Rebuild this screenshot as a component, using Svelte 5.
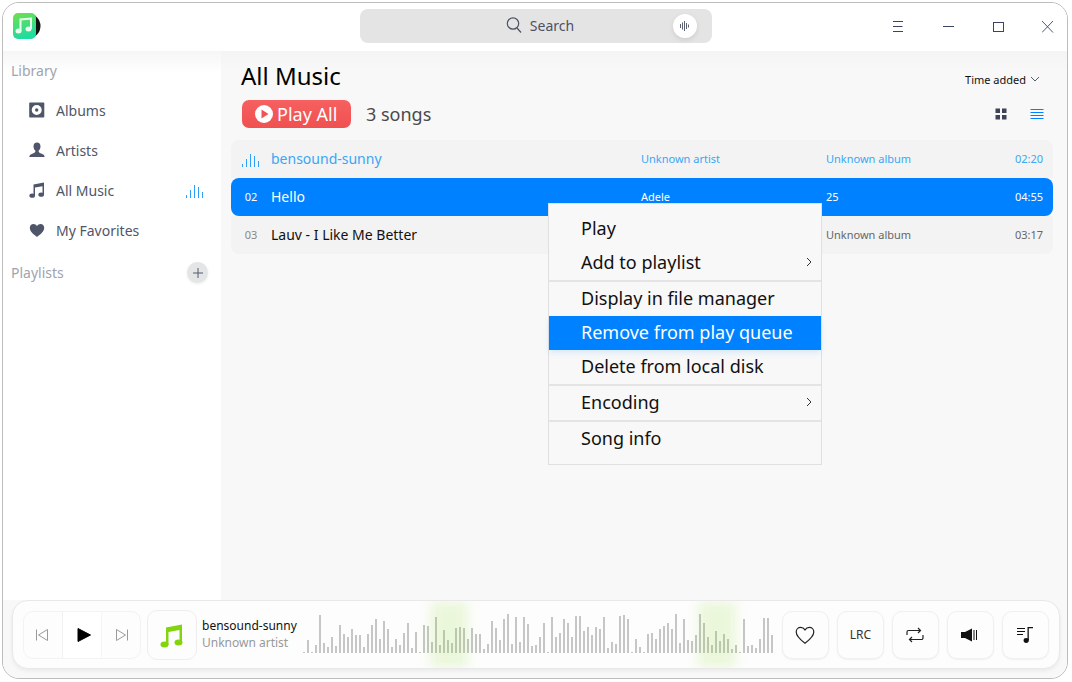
<script>
	const nav = [
		{ name: 'Albums', icon: 'album' },
		{ name: 'Artists', icon: 'artist' },
		{ name: 'All Music', icon: 'music', playing: true },
		{ name: 'My Favorites', icon: 'heart' }
	];
	const songs = [
		{ no: '', title: 'bensound-sunny', artist: 'Unknown artist', album: 'Unknown album', time: '02:20', cls: 'current' },
		{ no: '02', title: 'Hello', artist: 'Adele', album: '25', time: '04:55', cls: 'selected' },
		{ no: '03', title: 'Lauv - I Like Me Better', artist: '', album: 'Unknown album', time: '03:17', cls: 'plain' }
	];
	const menu = [
		[{ label: 'Play' }, { label: 'Add to playlist', sub: true }],
		[{ label: 'Display in file manager' }, { label: 'Remove from play queue', hover: true }, { label: 'Delete from local disk' }],
		[{ label: 'Encoding', sub: true }],
		[{ label: 'Song info' }]
	];
	// bar heights read off the waveform, in thirds of a pixel
	const wave = [3,38,3,24,114,30,18,48,21,84,57,48,72,54,54,18,57,84,102,42,96,72,18,42,24,60,90,15,63,3,84,81,33,108,24,69,39,30,75,78,75,42,75,57,57,12,27,96,75,39,102,117,27,108,33,108,87,21,24,48,90,3,108,48,60,102,90,48,111,111,66,78,54,78,72,108,15,33,27,111,114,102,3,42,18,3,57,60,42,72,81,90,72,117,30,102,39,36,54,117,90,48,24,66,36,57,42,12,24,3,102,21,24,15,42,105,105,54];
</script>

{#snippet bars()}
	<svg class="eq" width="18" height="16" viewBox="0 0 18 16">
		<rect x="0" y="12" width="1" height="3" /><rect x="4" y="7" width="1" height="8" /><rect x="8" y="2" width="1" height="13" /><rect x="12" y="4" width="1" height="11" /><rect x="16" y="9" width="1" height="6" />
	</svg>
{/snippet}

<div class="window">
	<header>
		<div class="logo">
			<svg width="30" height="28" viewBox="0 0 30 28">
				<defs>
					<linearGradient id="lg" x1="0" y1="0" x2="0.3" y2="1"><stop offset="0" stop-color="#72e04a" /><stop offset="1" stop-color="#1fdca0" /></linearGradient>
				</defs>
				<circle cx="15" cy="14" r="12.500" fill="#111" />
				<rect x="0" y="1" width="23" height="26" rx="5" fill="url(#lg)" />
				<path d="M7.500 19V7.500L18 6.500V17" fill="none" stroke="#eafff0" stroke-width="2" />
				<ellipse cx="5.500" cy="19" rx="3" ry="2.500" fill="#eafff0" />
				<ellipse cx="15.500" cy="17" rx="3" ry="2.500" fill="#eafff0" />
			</svg>
		</div>
		<div class="search">
			<svg width="18" height="18" viewBox="0 0 18 18" fill="none" stroke="#4c5263" stroke-width="1.200"><circle cx="8" cy="7.500" r="5.700" /><path d="M12 12l4 4.500" /></svg>
			<span>Search</span>
			<div class="voice">
				<svg width="12" height="12" viewBox="0 0 12 12" stroke="#5c6274" stroke-width="1"><path d="M1.500 4v4M3.500 2.500v7M5.500 1v10M7.500 3v6M9.500 4.500v3" /></svg>
			</div>
		</div>
		<div class="controls">
			<svg width="12" height="12" viewBox="0 0 12 12" stroke="#3b4560"><path d="M0 0.500h10M0 5.500h9.500M0 10.500h10" /></svg>
			<svg width="12" height="12" viewBox="0 0 12 12" stroke="#3b4560"><path d="M0 5.500h11" /></svg>
			<svg width="12" height="12" viewBox="0 0 12 12" fill="none" stroke="#3b4560"><rect x="0.500" y="1.500" width="10" height="9" /></svg>
			<svg width="12" height="12" viewBox="0 0 12 12" stroke="#3b4560" stroke-width="0.900"><path d="M0 0l11 11.500M11 0L0 11.500" /></svg>
		</div>
	</header>

	<div class="body">
		<aside>
			<h3>Library</h3>
			<nav>
				{#each nav as item}
					<div class="nav-item">
						<svg width="18" height="18" viewBox="0 0 18 18" fill="#4f5669">
							{#if item.icon === 'album'}
								<path fill-rule="evenodd" d="M2 1.500h13.500a.8.8 0 0 1 .8.8v13.400a.8.8 0 0 1-.8.8H2a.8.8 0 0 1-.8-.8V2.300a.8.8 0 0 1 .8-.8zM8.700 4a5 5 0 1 0 0 10 5 5 0 0 0 0-10z" />
								<circle cx="8.700" cy="9" r="1.700" />
							{:else if item.icon === 'artist'}
								<path d="M9 1.500c2.200 0 3.500 1.700 3.500 3.900 0 1.900-.9 3.400-1.800 4.200v1.200c0 .8 1.400 1.300 3 1.900 1.500.6 2.800 1.200 3 3.300H1.300c.2-2.100 1.500-2.700 3-3.300 1.600-.6 3-1.100 3-1.900V9.600c-.9-.8-1.800-2.300-1.800-4.200 0-2.200 1.300-3.900 3.500-3.900z" />
							{:else if item.icon === 'music'}
								<path d="M5.500 3.500L16 1.500v12h-1.500V5.200L7 6.600V15H5.500z" />
								<ellipse cx="4.200" cy="14.700" rx="2.800" ry="2.100" />
								<ellipse cx="13.200" cy="13.700" rx="2.800" ry="2.100" />
							{:else}
								<path d="M9 16C5 13 1.800 10.300 1.800 6.800 1.800 4.500 3.500 3 5.400 3 6.900 3 8.200 3.800 9 5.100 9.800 3.800 11.100 3 12.600 3c1.900 0 3.600 1.500 3.600 3.800C16.200 10.300 13 13 9 16z" />
							{/if}
						</svg>
						<span>{item.name}</span>
						{#if item.playing}{@render bars()}{/if}
					</div>
				{/each}
			</nav>
			<div class="playlists">
				<h3>Playlists</h3>
				<div class="add">
					<svg width="12" height="12" viewBox="0 0 12 12" stroke="#555b6c"><path d="M6 1v10M1 6h10" /></svg>
				</div>
			</div>
		</aside>

		<main>
			<div class="title-row">
				<h1>All Music</h1>
				<div class="sort">
					<span>Time added</span>
					<svg width="10" height="10" viewBox="0 0 10 10" fill="none" stroke="#555b6c"><path d="M1 3l4 4 4-4" /></svg>
				</div>
			</div>
			<div class="action-row">
				<button class="play-all">
					<svg width="18" height="18" viewBox="0 0 18 18"><circle cx="9" cy="9" r="9" fill="#fff" /><path d="M6.500 4.500l7 4.500-7 4.500z" fill="#f25454" /></svg>
					Play All
				</button>
				<span class="count">3 songs</span>
				<div class="views">
					<svg width="12" height="12" viewBox="0 0 12 12" fill="#3d4358"><rect x="0.500" y="0.500" width="4.500" height="4.500" /><rect x="7" y="0.500" width="4.500" height="4.500" /><rect x="0.500" y="7" width="4.500" height="4.500" /><rect x="7" y="7" width="4.500" height="4.500" /></svg>
					<svg width="14" height="12" viewBox="0 0 14 12" stroke="#0081ff"><path d="M0.500 1.500h13M0.500 4.500h13M0.500 7.500h13M0.500 10.500h13" /></svg>
				</div>
			</div>
			<div class="list">
				{#each songs as song}
					<div class="row {song.cls}">
						<div class="no">{#if song.no}{song.no}{:else}{@render bars()}{/if}</div>
						<div class="song-title">{song.title}</div>
						<div class="artist">{song.artist}</div>
						<div class="album">{song.album}</div>
						<div class="time">{song.time}</div>
					</div>
				{/each}
			</div>
		</main>
	</div>

	<footer>
		<div class="player">
			<div class="transport">
				<div class="t-btn prev">
					<svg width="14" height="14" viewBox="0 0 14 14" fill="none" stroke="#9a9a9a"><path d="M1.500 1.500v11M12.500 1.500v11L3.500 7z" /></svg>
				</div>
				<div class="t-btn main">
					<svg width="16" height="16" viewBox="0 0 16 16" fill="#000" stroke="#000" stroke-linejoin="round"><path d="M2 1.500L14.500 8 2 14.500z" /></svg>
				</div>
				<div class="t-btn next">
					<svg width="14" height="14" viewBox="0 0 14 14" fill="none" stroke="#9a9a9a"><path d="M12.500 1.500v11M1.500 1.500v11l9-5.500z" /></svg>
				</div>
			</div>
			<div class="cover">
				<svg width="26" height="28" viewBox="0 0 26 28" fill="#82d40f">
					<path d="M7 6.500L23 3.500v18h-2.500V9L9.500 11v13H7z" />
					<ellipse cx="5.500" cy="23.500" rx="4" ry="3" />
					<ellipse cx="19.500" cy="21.500" rx="4" ry="3" />
				</svg>
			</div>
			<div class="now">
				<div class="now-title">bensound-sunny</div>
				<div class="now-artist">Unknown artist</div>
			</div>
			<div class="wave">
				{#each wave as h}
					<i style="height:{h / 3}px"></i>
				{/each}
				<b class="glow g1"></b>
				<b class="glow g2"></b>
			</div>
			<div class="tools">
				<div class="tool">
					<svg class="nudge" width="22" height="22" viewBox="0 0 20 20" fill="none" stroke="#222" stroke-width="1.100"><path d="M10 17.500C5.500 14 2 11 2 7.200 2 4.700 3.900 3 6 3c1.700 0 3.100.9 4 2.300C10.900 3.900 12.300 3 14 3c2.100 0 4 1.700 4 4.200 0 3.800-3.500 6.800-8 10.300z" /></svg>
				</div>
				<div class="tool lrc">LRC</div>
				<div class="tool">
					<svg class="nudge" width="18" height="16" viewBox="0 0 18 16" fill="none" stroke="#222" stroke-width="1.200"><path d="M1 8V5a1.500 1.500 0 0 1 1.500-1.500H14M12 1l2.500 2.500L12 6M17 8v3a1.500 1.500 0 0 1-1.500 1.500H4M6 10l-2.500 2.500L6 15" /></svg>
				</div>
				<div class="tool">
					<svg class="nudge two" width="16" height="14" viewBox="0 0 16 14" fill="#111"><path d="M0 4h4l7-3.500v13L4 10H0z" /><rect x="12.500" y="2" width="1" height="10" /><rect x="15" y="2" width="1" height="10" /></svg>
				</div>
				<div class="tool">
					<svg width="18" height="18" viewBox="0 0 18 18" fill="#111"><rect x="0" y="2" width="8" height="1" /><rect x="0" y="5" width="8" height="1" /><rect x="0" y="8" width="6" height="1" /><path d="M10.500 1H16v1.300h-4.200V14H10.500z" /><ellipse cx="9.200" cy="14.500" rx="2.600" ry="2.400" /></svg>
				</div>
			</div>
		</div>
	</footer>

	<div class="context">
		{#each menu as group, i}
			{#if i > 0}<div class="sep"></div>{/if}
			{#each group as item}
				<div class="menu-item" class:hover={item.hover}>
					<span>{item.label}</span>
					{#if item.sub}
						<svg width="6" height="10" viewBox="0 0 6 10" fill="none" stroke="#333"><path d="M1 1l4 4-4 4" /></svg>
					{/if}
				</div>
			{/each}
		{/each}
	</div>
</div>

<style>
	:global(body) {
		background: #fff;
		font-family: 'Noto Sans', sans-serif;
	}
	.window {
		position: relative;
		box-sizing: border-box;
		width: 1066px;
		height: 677px;
		margin: 2px 0 0 2px;
		border: 1px solid #bdbdbd;
		border-radius: 17px;
		overflow: hidden;
		display: flex;
		flex-direction: column;
		background: #f8f8f8;
	}
	header {
		height: 48px;
		flex: none;
		background: #fff;
		display: flex;
		align-items: center;
		position: relative;
	}
	.logo {
		margin: 0 0 2px 10px;
		height: 28px;
	}
	.search {
		position: absolute;
		left: 357px;
		top: 6px;
		width: 352px;
		height: 34px;
		box-sizing: border-box;
		padding: 0 0 2px 7px;
		border-radius: 8px;
		background: #e4e4e4;
		display: flex;
		align-items: center;
		justify-content: center;
		gap: 7px;
		font-size: 14px;
		color: #4c5263;
	}
	.voice {
		position: absolute;
		right: 15px;
		top: 5px;
		width: 24px;
		height: 24px;
		border-radius: 50%;
		background: #fff;
		box-shadow: 0 2px 5px rgba(0, 0, 0, 0.1);
		display: flex;
		align-items: center;
		justify-content: center;
	}
	.controls {
		margin-left: auto;
		display: flex;
		gap: 38px;
		align-items: center;
		padding: 0 13px 0 0;
	}
	.controls svg:last-child {
		margin-left: -1px;
	}
	.body {
		flex: 1;
		min-height: 0;
		display: flex;
	}
	aside {
		width: 218px;
		flex: none;
		background: linear-gradient(#f6f6f6, #fff 22px);
		box-sizing: border-box;
		padding: 10px 12px 0 8px;
	}
	h3 {
		margin: 0;
		font-size: 14px;
		font-weight: 400;
		line-height: 20px;
		color: #a0a4ae;
	}
	nav {
		margin-top: 9px;
		display: flex;
		flex-direction: column;
		padding-left: 17px;
	}
	.nav-item {
		height: 40px;
		display: flex;
		align-items: center;
		gap: 10px;
		font-size: 14px;
		color: #4f5669;
	}
	.eq {
		fill: #2ea0f5;
	}
	.nav-item .eq {
		margin-left: auto;
		margin-top: 2px;
		margin-right: 5px;
	}
	.no .eq {
		margin-top: 4px;
	}
	.playlists {
		margin-top: 12px;
		display: flex;
		align-items: center;
		justify-content: space-between;
	}
	.add {
		width: 21px;
		height: 21px;
		border-radius: 50%;
		background: #e4e5e7;
		box-shadow: 0 1px 3px rgba(0, 0, 0, 0.08);
		display: flex;
		align-items: center;
		justify-content: center;
		margin-right: 1px;
	}
	main {
		flex: 1;
		min-width: 0;
		background: linear-gradient(#f4f4f4, #f8f8f8 20px);
		padding: 0 14px 0 10px;
	}
	.title-row {
		display: flex;
		align-items: center;
		justify-content: space-between;
		height: 48px;
		padding: 0 10px;
	}
	h1 {
		margin: 2px 0 0;
		font-size: 24px;
		font-weight: 400;
		line-height: 48px;
		color: #000;
	}
	.sort {
		display: flex;
		align-items: center;
		gap: 4px;
		font-size: 11px;
		color: #111;
		margin-top: 8px;
		padding-right: 3px;
	}
	.action-row {
		display: flex;
		align-items: center;
		height: 30px;
		padding-left: 11px;
		padding-right: 9px;
	}
	.play-all {
		width: 109px;
		height: 28px;
		border: none;
		border-radius: 7px;
		background: linear-gradient(#f66060, #f05050);
		color: #fff;
		font: 400 18px 'Noto Sans', sans-serif;
		display: flex;
		align-items: center;
		gap: 4px;
		padding: 0 0 0 13px;
	}
	.count {
		margin-left: 15px;
		font-size: 18px;
		color: #4a4a4a;
	}
	.views {
		margin-left: auto;
		display: flex;
		align-items: center;
		gap: 23px;
	}
	.list {
		margin-top: 11px;
		display: flex;
		flex-direction: column;
	}
	.row {
		height: 38px;
		box-sizing: border-box;
		padding-bottom: 2px;
		display: flex;
		align-items: center;
		font-size: 14px;
		background: #f3f3f3;
	}
	.row:first-child {
		border-radius: 8px 8px 0 0;
	}
	.row:last-child {
		border-radius: 0 0 8px 8px;
	}
	.no {
		width: 40px;
		flex: none;
		text-align: center;
		font-size: 11px;
		color: #888;
		display: flex;
		justify-content: center;
	}
	.song-title {
		width: 370px;
		flex: none;
		color: #111;
	}
	.artist,
	.album {
		width: 185px;
		flex: none;
		font-size: 11px;
		color: #666;
	}
	.album {
		width: 170px;
	}
	.time {
		flex: 1;
		text-align: right;
		padding-right: 10px;
		font-size: 11px;
		color: #666;
	}
	.current .song-title,
	.current .artist,
	.current .album,
	.current .time {
		color: #3aa6f5;
	}
	.selected {
		background: #0081ff;
		border-radius: 8px;
	}
	.selected .no,
	.selected .song-title,
	.selected .artist,
	.selected .album,
	.selected .time {
		color: #fff;
	}
	footer {
		height: 78px;
		flex: none;
		box-sizing: border-box;
		padding: 0 7px 9px 9px;
		background: #f8f8f8;
	}
	.player {
		height: 69px;
		box-sizing: border-box;
		border: 1px solid #e8e8e8;
		border-radius: 16px;
		background: #fdfdfd;
		box-shadow: 0 2px 4px rgba(0, 0, 0, 0.06);
		display: flex;
		align-items: center;
		padding: 0 10px;
	}
	.transport {
		flex: none;
		display: flex;
		height: 48px;
		box-sizing: border-box;
		border: 1px solid #f3f3f3;
		border-radius: 10px;
		overflow: hidden;
	}
	.t-btn {
		width: 38px;
		display: flex;
		align-items: center;
		justify-content: center;
	}
	.prev {
		padding-right: 3px;
		box-sizing: border-box;
	}
	.next {
		padding-left: 1px;
		box-sizing: border-box;
	}
	.t-btn.main {
		width: 40px;
		box-sizing: border-box;
		padding-left: 3px;
		border-left: 1px solid #f1f1f1;
		border-right: 1px solid #f6f6f6;
		background: #fff;
	}
	.cover {
		flex: none;
		margin-left: 6px;
		width: 50px;
		height: 50px;
		box-sizing: border-box;
		border: 1px solid #eee;
		border-radius: 10px;
		display: flex;
		align-items: center;
		justify-content: center;
	}
	.now {
		margin: 0 0 1px 5px;
		width: 101px;
		flex: none;
		line-height: 17px;
		font-size: 12px;
	}
	.now-title {
		color: #111;
	}
	.now-artist {
		color: #999;
	}
	.wave {
		position: relative;
		align-self: stretch;
		width: 472px;
		flex: none;
		overflow: hidden;
		display: flex;
		align-items: flex-end;
		gap: 2px;
		padding-bottom: 15px;
		box-sizing: border-box;
	}
	.wave i {
		width: 2px;
		flex: none;
		background: #c6c6c6;
	}
	.glow {
		position: absolute;
		top: 0;
		bottom: 0;
		width: 38px;
		background: rgba(130, 212, 15, 0.14);
		filter: blur(6px);
	}
	.g1 {
		left: 127px;
	}
	.g2 {
		left: 395px;
	}
	.tools {
		flex: none;
		margin-left: 7px;
		display: flex;
		gap: 8px;
	}
	.tool {
		width: 47px;
		height: 48px;
		box-sizing: border-box;
		border: 1px solid #f0f0f0;
		border-radius: 10px;
		background: #fdfdfd;
		box-shadow: 0 1px 2px rgba(0, 0, 0, 0.05);
		display: flex;
		align-items: center;
		justify-content: center;
	}
	.nudge {
		margin-right: 2px;
	}
	.nudge.two {
		margin-right: 4px;
	}
	.lrc {
		font-size: 12px;
		color: #333;
	}
	.context {
		position: absolute;
		left: 545px;
		top: 200px;
		width: 274px;
		box-sizing: border-box;
		border: 1px solid #e0e0e0;
		background: #f8f8f8;
		padding: 8px 0 8px;
	}
	.menu-item {
		height: 34px;
		box-sizing: border-box;
		padding: 0 9px 2px 32px;
		display: flex;
		align-items: center;
		justify-content: space-between;
		font-size: 18px;
		color: #111;
	}
	.menu-item.hover {
		background: #0081ff;
		color: #fff;
		box-shadow: 0 3px 6px rgba(0, 129, 255, 0.12);
		position: relative;
	}
	.sep {
		height: 2px;
		background: #e4e4e4;
	}
</style>
